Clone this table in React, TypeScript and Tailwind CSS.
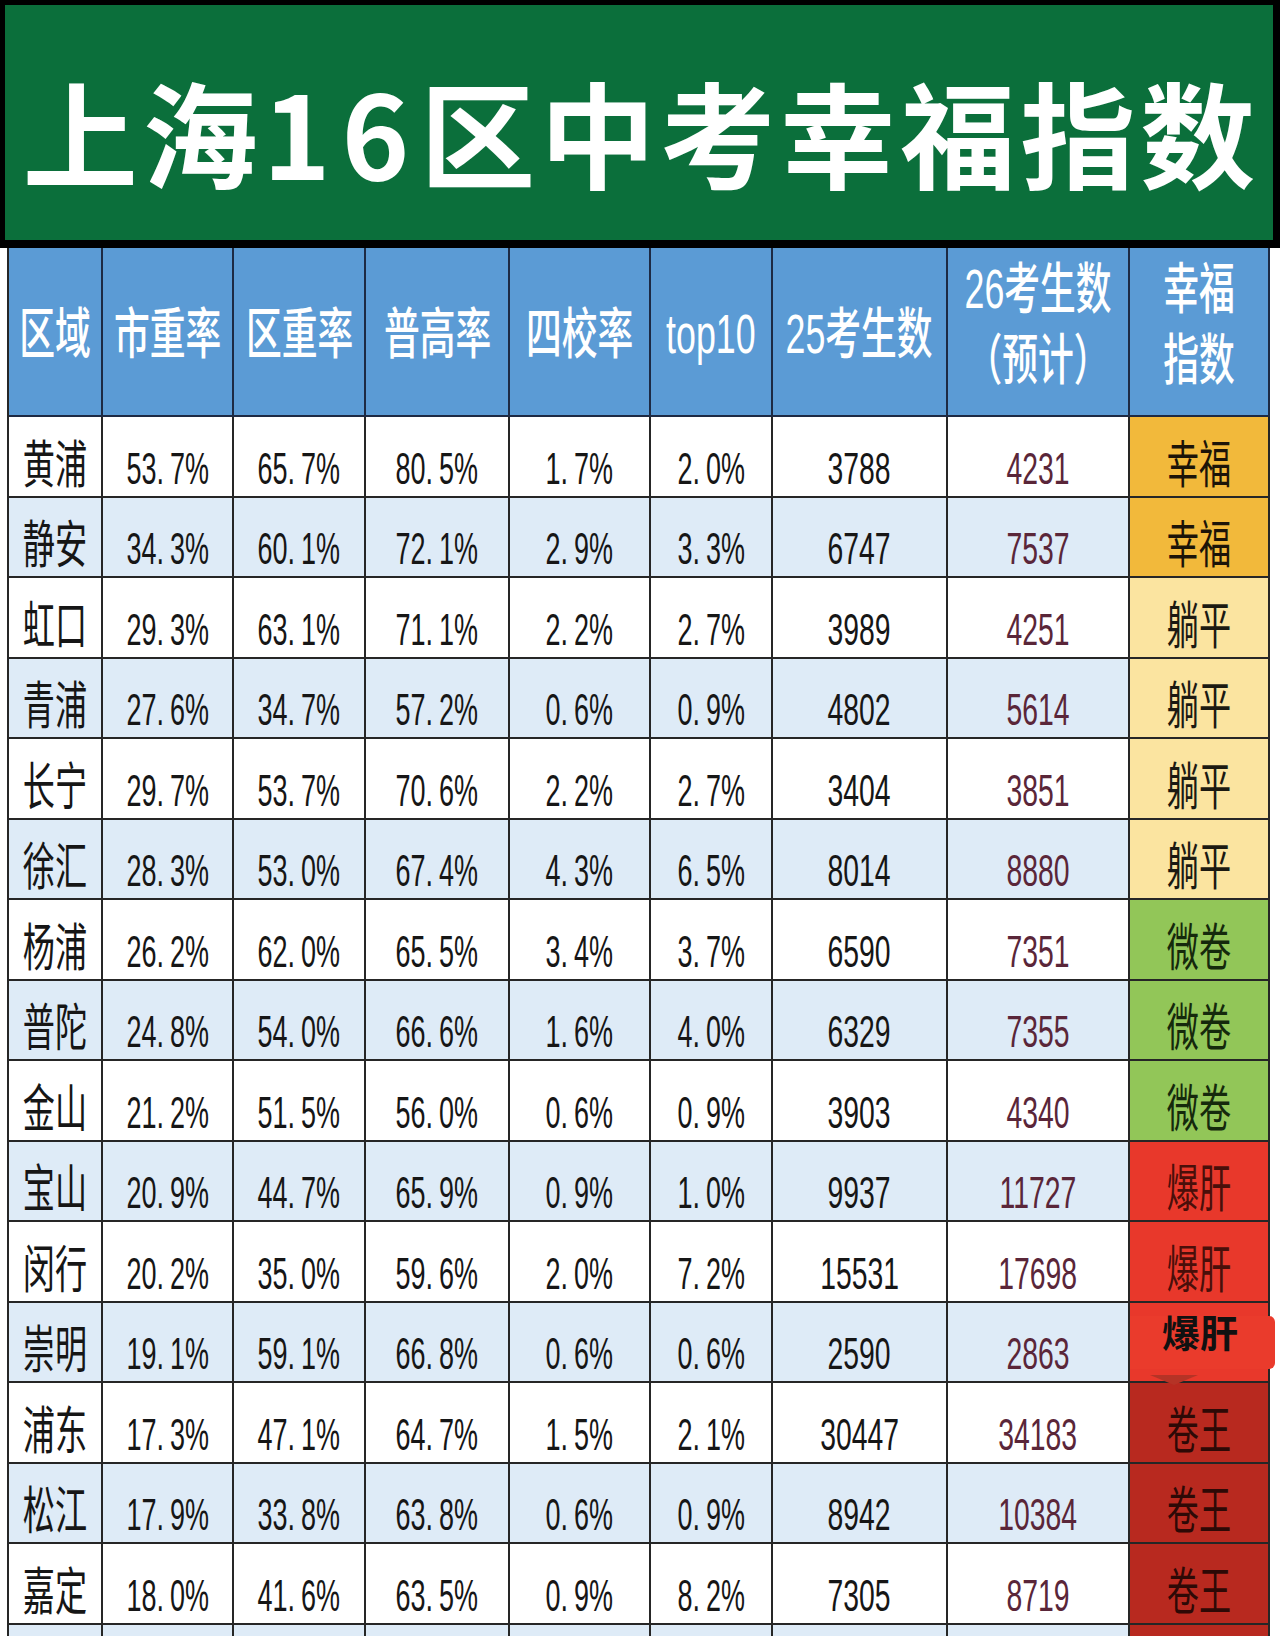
import React from "react";

type Row = {
  name: string;
  vals: string[];
  n25: string;
  n26: string;
  label: string;
};

const rows: Row[] = [
  { name: "黄浦", vals: ["53.7%", "65.7%", "80.5%", "1.7%", "2.0%"], n25: "3788", n26: "4231", label: "幸福" },
  { name: "静安", vals: ["34.3%", "60.1%", "72.1%", "2.9%", "3.3%"], n25: "6747", n26: "7537", label: "幸福" },
  { name: "虹口", vals: ["29.3%", "63.1%", "71.1%", "2.2%", "2.7%"], n25: "3989", n26: "4251", label: "躺平" },
  { name: "青浦", vals: ["27.6%", "34.7%", "57.2%", "0.6%", "0.9%"], n25: "4802", n26: "5614", label: "躺平" },
  { name: "长宁", vals: ["29.7%", "53.7%", "70.6%", "2.2%", "2.7%"], n25: "3404", n26: "3851", label: "躺平" },
  { name: "徐汇", vals: ["28.3%", "53.0%", "67.4%", "4.3%", "6.5%"], n25: "8014", n26: "8880", label: "躺平" },
  { name: "杨浦", vals: ["26.2%", "62.0%", "65.5%", "3.4%", "3.7%"], n25: "6590", n26: "7351", label: "微卷" },
  { name: "普陀", vals: ["24.8%", "54.0%", "66.6%", "1.6%", "4.0%"], n25: "6329", n26: "7355", label: "微卷" },
  { name: "金山", vals: ["21.2%", "51.5%", "56.0%", "0.6%", "0.9%"], n25: "3903", n26: "4340", label: "微卷" },
  { name: "宝山", vals: ["20.9%", "44.7%", "65.9%", "0.9%", "1.0%"], n25: "9937", n26: "11727", label: "爆肝" },
  { name: "闵行", vals: ["20.2%", "35.0%", "59.6%", "2.0%", "7.2%"], n25: "15531", n26: "17698", label: "爆肝" },
  { name: "崇明", vals: ["19.1%", "59.1%", "66.8%", "0.6%", "0.6%"], n25: "2590", n26: "2863", label: "爆肝" },
  { name: "浦东", vals: ["17.3%", "47.1%", "64.7%", "1.5%", "2.1%"], n25: "30447", n26: "34183", label: "卷王" },
  { name: "松江", vals: ["17.9%", "33.8%", "63.8%", "0.6%", "0.9%"], n25: "8942", n26: "10384", label: "卷王" },
  { name: "嘉定", vals: ["18.0%", "41.6%", "63.5%", "0.9%", "8.2%"], n25: "7305", n26: "8719", label: "卷王" },
];

const labelStyle: Record<string, string> = {
  幸福: "bg-[#f2b93b] text-[#1c1408]",
  躺平: "bg-[#fbe4a0] text-[#1c1a12]",
  微卷: "bg-[#92c658] text-[#15290c]",
  爆肝: "bg-[#e8382b] text-[#4a0f0a]",
  卷王: "bg-[#b8291f] text-[#2e0906]",
};

const headCell = "flex items-center justify-center border-r-2 border-b-2 border-[#1d2a44] bg-[#5b9bd5] text-white";
const bodyCell = "flex items-center justify-center border-r-2 border-b-2 border-[#262626]";
const narrow = "inline-block whitespace-nowrap leading-none";

function Pct({ v }: { v: string }) {
  const [a, b] = v.split(".");
  return (
    <>
      {a}.<span className="ml-[10px]">{b}</span>
    </>
  );
}

export default function App() {
  return (
    <div className="w-[1280px] h-[1636px] overflow-hidden bg-white font-['Liberation_Sans','Noto_Sans_CJK_SC',sans-serif]">
      <div className="bg-black pt-[5px] pl-[5px] pr-[7px] pb-[8px]">
        <div className="h-[235px] bg-[#0b6f3b] flex justify-center pt-[68px]">
          <h1 className="pl-[5px] text-[115px] leading-none font-bold text-white tracking-[5px] whitespace-nowrap font-['Noto_Sans_CJK_SC',sans-serif]">
            上海<span className="tracking-[11px]">16</span>区中考幸福指数
          </h1>
        </div>
      </div>

      <div className="ml-[7px] w-[1263px] border-l-2 border-[#262626] grid grid-cols-[94px_131px_132px_144px_141px_122px_175px_182px_140px]">
        {/* header */}
        {["区域", "市重率", "区重率", "普高率", "四校率", "top10", "25考生数"].map((h) => (
          <div key={h} className={`${headCell} h-[169px] pt-[6px]`}>
            <span className="inline-block whitespace-nowrap leading-none scale-x-[0.65] text-[55px] font-medium">{h}</span>
          </div>
        ))}
        <div className={`${headCell} h-[169px] pb-[13px]`}>
          <span className="inline-block whitespace-nowrap leading-[71px] scale-x-[0.65] text-[55px] font-medium text-center">
            26考生数
            <br />
            （预计）
          </span>
        </div>
        <div className={`${headCell} h-[169px] pb-[13px]`}>
          <span className="inline-block whitespace-nowrap leading-[71px] scale-x-[0.65] text-[55px] font-medium text-center">
            幸福
            <br />
            指数
          </span>
        </div>

        {/* body */}
        {rows.map((r, i) => {
          const bg = i % 2 === 1 ? "bg-[#deebf7]" : "bg-white";
          return (
            <React.Fragment key={r.name}>
              <div className={`${bodyCell} ${bg} h-[80.5px] pt-[18px] text-[#161616]`}>
                <span className={`${narrow} scale-x-[0.63] text-[51px]`}>{r.name}</span>
              </div>
              {r.vals.map((v, j) => (
                <div key={j} className={`${bodyCell} ${bg} h-[80.5px] pt-[24px] text-[#161616]`}>
                  <span className={`${narrow} scale-x-[0.6] text-[45px]`}>
                    <Pct v={v} />
                  </span>
                </div>
              ))}
              <div className={`${bodyCell} ${bg} h-[80.5px] pt-[24px] text-[#161616]`}>
                <span className={`${narrow} scale-x-[0.63] text-[45px]`}>{r.n25}</span>
              </div>
              <div className={`${bodyCell} ${bg} h-[80.5px] pt-[24px] text-[#5a2639]`}>
                <span className={`${narrow} scale-x-[0.63] text-[45px]`}>{r.n26}</span>
              </div>
              {r.name === "崇明" ? (
                <div className={`${bodyCell} ${labelStyle[r.label]} h-[80.5px] relative border-b-0`}>
                  <div className="absolute left-0 top-[13px] w-[145px] h-[53px] bg-[#ea3b2c] rounded-r-[6px]" />
                  <span className="absolute left-[32px] top-[9px] text-[38px] leading-none font-bold text-[#111] whitespace-nowrap font-['Noto_Sans_CJK_SC',sans-serif]">
                    {r.label}
                  </span>
                  <div className="absolute left-[20px] top-[72px] z-10 w-0 h-0 border-l-[24px] border-r-[24px] border-t-[10px] border-l-transparent border-r-transparent border-t-[#b53326]" />
                </div>
              ) : (
                <div className={`${bodyCell} ${labelStyle[r.label]} h-[80.5px] pt-[18px]`}>
                  <span className={`${narrow} scale-x-[0.63] text-[51px]`}>{r.label}</span>
                </div>
              )}
            </React.Fragment>
          );
        })}

        {/* partially visible next row */}
        {Array.from({ length: 8 }).map((_, j) => (
          <div key={`x${j}`} className={`${bodyCell} bg-[#deebf7] h-[80.5px]`} />
        ))}
        <div className={`${bodyCell} bg-[#b8291f] h-[80.5px]`} />
      </div>
    </div>
  );
}
